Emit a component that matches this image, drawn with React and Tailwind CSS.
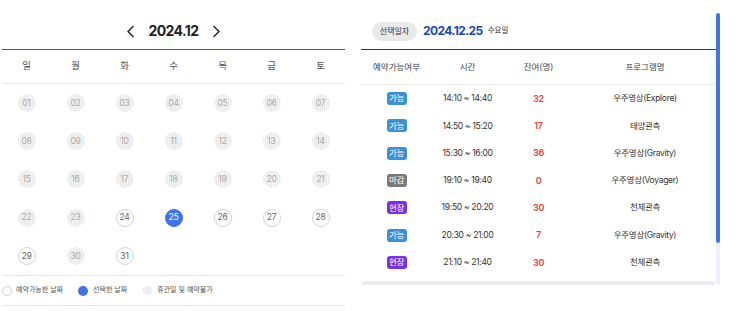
import React from "react";

const font = { fontFamily: "Inter, 'Noto Sans CJK KR', sans-serif" };

const weekdays = ["일", "월", "화", "수", "목", "금", "토"];
const available = new Set([24, 26, 27, 28, 29, 31]);
const selected = 25;

const rows = [
  { s: "가능", t: "14:10 ~ 14:40", n: "32", p: "우주영상(Explore)" },
  { s: "가능", t: "14:50 ~ 15:20", n: "17", p: "태양관측" },
  { s: "가능", t: "15:30 ~ 16:00", n: "36", p: "우주영상(Gravity)" },
  { s: "마감", t: "19:10 ~ 19:40", n: "0", p: "우주영상(Voyager)" },
  { s: "현장", t: "19:50 ~ 20:20", n: "30", p: "천체관측" },
  { s: "가능", t: "20:30 ~ 21:00", n: "7", p: "우주영상(Gravity)" },
  { s: "현장", t: "21:10 ~ 21:40", n: "30", p: "천체관측" },
];

const badgeCls = {
  가능: "bg-[#3d8fd6]",
  마감: "bg-[#7a7a7a]",
  현장: "bg-[#7b2fe6]",
};

const stripe =
  "bg-[repeating-linear-gradient(90deg,#e9e9e9_0px,#e9e9e9_1px,#f4f4f4_1px,#f4f4f4_2px)]";

function DateCell({ d }) {
  if (!d) return <div className="h-[38px]" />;
  let cls;
  if (d === selected) cls = "bg-[#3f72f2] text-white border border-[#3f72f2]";
  else if (available.has(d)) cls = "bg-white text-[#666] border border-[#d2d2d2]";
  else cls = `${stripe} text-[#aaa]`;
  return (
    <div className="h-[38px] flex items-center justify-center">
      <div
        className={`w-[18px] h-[18px] rounded-full flex items-center justify-center text-[8.5px] leading-none tracking-[-0.2px] ${cls}`}
      >
        {String(d).padStart(2, "0")}
      </div>
    </div>
  );
}

function Chevron({ dir }) {
  return (
    <svg width="9" height="13" viewBox="0 0 9 13" fill="none">
      <path
        d={dir === "l" ? "M7.5 1 L2 6.5 L7.5 12" : "M1.5 1 L7 6.5 L1.5 12"}
        stroke="#222"
        strokeWidth="1.4"
      />
    </svg>
  );
}

export default function App() {
  const days = Array.from({ length: 31 }, (_, i) => i + 1);
  const cells = [...days, null, null, null, null];
  return (
    <div style={font} className="w-[743px] h-[311px] bg-white flex overflow-hidden">
      {/* Left calendar */}
      <div className="ml-[2px] w-[343px] flex flex-col">
        <div className="h-[50px] flex items-end justify-center pb-[11px] gap-[14px] border-b border-[#555]">
          <Chevron dir="l" />
          <span className="text-[14px] font-bold text-[#222] tracking-[-0.6px] leading-none">
            2024.12
          </span>
          <Chevron dir="r" />
        </div>
        <div className="h-[34px] grid grid-cols-7 border-b border-[#e6e6e6]">
          {weekdays.map((w) => (
            <div key={w} className="flex items-center justify-center text-[9.5px] text-[#555]">
              {w}
            </div>
          ))}
        </div>
        <div className="grid grid-cols-7 h-[191px]">
          {cells.map((d, i) => (
            <DateCell key={i} d={d} />
          ))}
        </div>
        <div className="h-[31px] flex items-center border-y border-[#e6e6e6] text-[7px] text-[#555]">
          <div className="w-[10px] h-[10px] rounded-full border border-[#cfcfcf] bg-white" />
          <span className="ml-[4px]">예약가능한 날짜</span>
          <div className="ml-[15px] w-[10px] h-[10px] rounded-full bg-[#3f72f2]" />
          <span className="ml-[5px]">선택한 날짜</span>
          <div className={`ml-[16px] w-[9px] h-[9px] rounded-full ${stripe}`} />
          <span className="ml-[5px]">휴관일 및 예약불가</span>
        </div>
      </div>

      {/* Right list */}
      <div className="ml-[16px] w-[355px] flex flex-col">
        <div className="h-[50px] flex items-center pt-[13px] border-b border-[#333]">
          <div className="ml-[11px] w-[45px] h-[19px] rounded-full bg-[#e9e9e9] flex items-center justify-center text-[8px] text-[#333]">
            선택일자
          </div>
          <span className="ml-[6px] text-[12px] font-bold text-[#1c44c8] tracking-[-0.6px] leading-none">
            2024.12.25
          </span>
          <span className="ml-[5px] text-[7.5px] text-[#333]">수요일</span>
        </div>
        <div className="h-[35px] grid grid-cols-[20%_20%_20%_40%] border-b border-[#ececec] text-[8.5px] text-[#444]">
          <div className="flex items-center justify-center">예약가능여부</div>
          <div className="flex items-center justify-center">시간</div>
          <div className="flex items-center justify-center">잔여(명)</div>
          <div className="flex items-center justify-center">프로그램명</div>
        </div>
        {rows.map((r, i) => (
          <div
            key={i}
            className="h-[27.3px] grid grid-cols-[20%_20%_20%_40%] text-[8.5px] text-[#333] tracking-[-0.3px]"
          >
            <div className="flex items-center justify-center">
              <div
                className={`w-[20px] h-[13px] rounded-[3px] text-white text-[8.5px] flex items-center justify-center leading-none ${badgeCls[r.s]}`}
              >
                {r.s}
              </div>
            </div>
            <div className="flex items-center justify-center">{r.t}</div>
            <div className="flex items-center justify-center text-[#f23a3a] font-semibold text-[9px]">
              {r.n}
            </div>
            <div className="flex items-center justify-center">{r.p}</div>
          </div>
        ))}
        <div className="mt-[5px] mx-[1px] h-[4px] rounded-t-[4px] bg-[#ebebeb]" />
      </div>

      {/* Scrollbar */}
      <div className="mt-[13px] w-[4px] h-[272px] bg-[#eaf0fe] rounded-full flex flex-col">
        <div className="h-[230px] rounded-full bg-[#4272f7]" />
      </div>
    </div>
  );
}
